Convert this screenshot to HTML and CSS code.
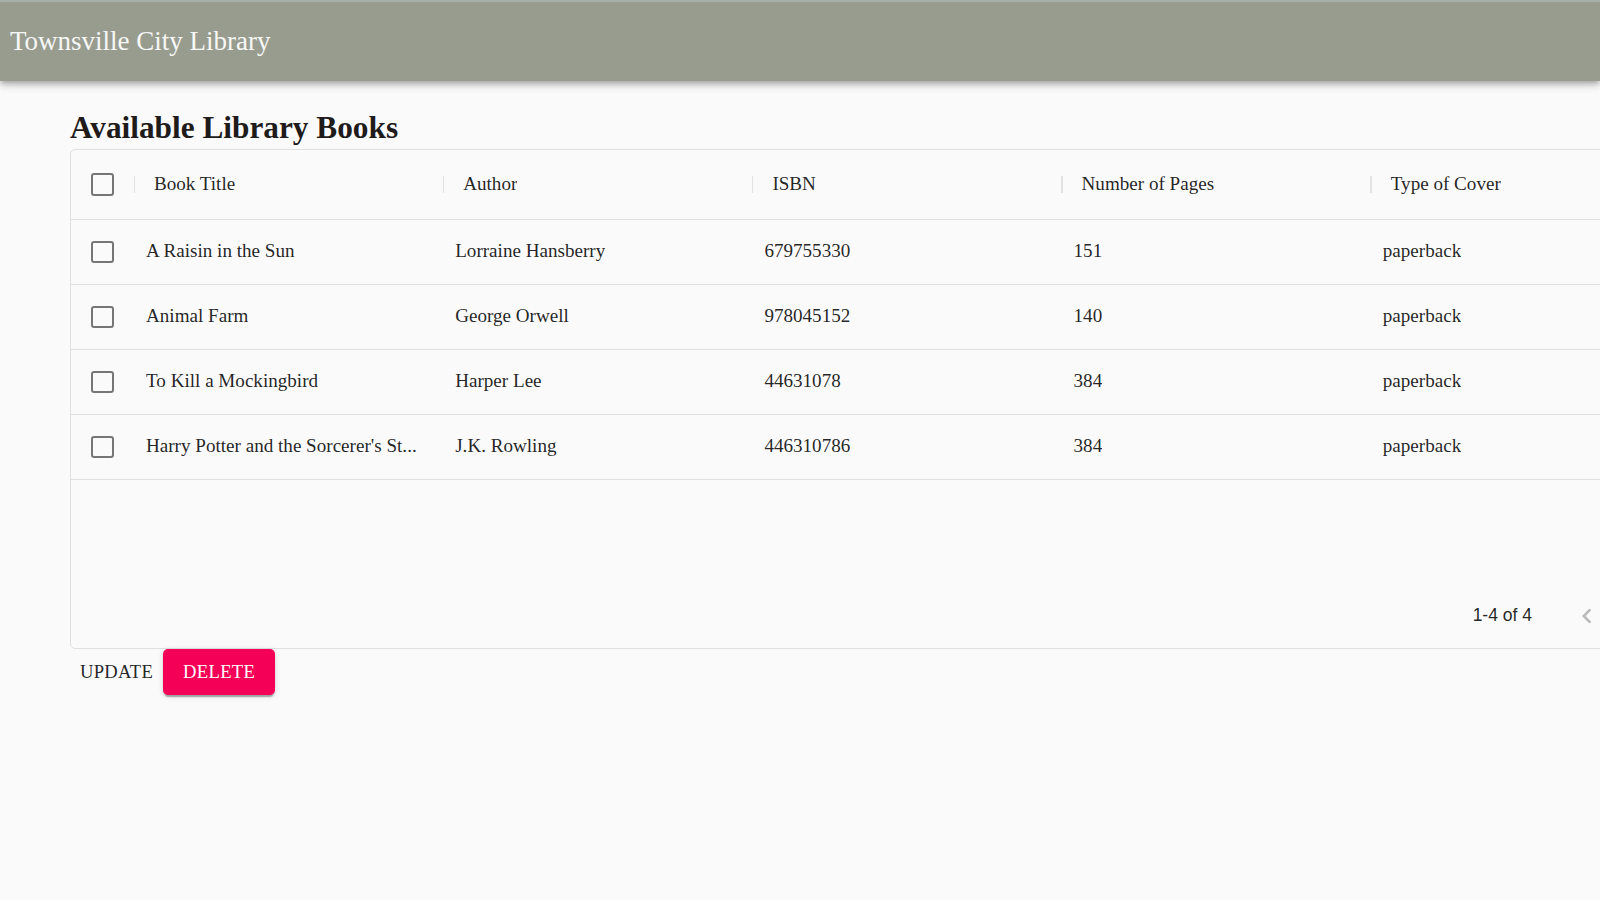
FILE: index.html
```html
<!DOCTYPE html>
<html lang="en">
<head>
<meta charset="utf-8">
<title>Townsville City Library</title>
<link rel="stylesheet" href="styles.css">
</head>
<body>
<header class="appbar">
  <h1 class="brand">Townsville City Library</h1>
</header>
<main class="content">
  <h2 class="page-title">Available Library Books</h2>
  <div class="datagrid">
    <div class="dg-row dg-header">
      <div class="dg-cell dg-check"><span class="checkbox"></span></div>
      <div class="dg-cell dg-hcell"><span class="txt">Book Title</span></div>
      <div class="dg-cell dg-hcell"><span class="txt">Author</span></div>
      <div class="dg-cell dg-hcell"><span class="txt">ISBN</span></div>
      <div class="dg-cell dg-hcell"><span class="txt">Number of Pages</span></div>
      <div class="dg-cell dg-hcell"><span class="txt">Type of Cover</span></div>
    </div>
    <div class="dg-body">
      <div class="dg-row dg-data">
        <div class="dg-cell dg-check"><span class="checkbox"></span></div>
        <div class="dg-cell"><span class="txt">A Raisin in the Sun</span></div>
        <div class="dg-cell"><span class="txt">Lorraine Hansberry</span></div>
        <div class="dg-cell"><span class="txt">679755330</span></div>
        <div class="dg-cell"><span class="txt">151</span></div>
        <div class="dg-cell"><span class="txt">paperback</span></div>
      </div>
      <div class="dg-row dg-data">
        <div class="dg-cell dg-check"><span class="checkbox"></span></div>
        <div class="dg-cell"><span class="txt">Animal Farm</span></div>
        <div class="dg-cell"><span class="txt">George Orwell</span></div>
        <div class="dg-cell"><span class="txt">978045152</span></div>
        <div class="dg-cell"><span class="txt">140</span></div>
        <div class="dg-cell"><span class="txt">paperback</span></div>
      </div>
      <div class="dg-row dg-data">
        <div class="dg-cell dg-check"><span class="checkbox"></span></div>
        <div class="dg-cell"><span class="txt">To Kill a Mockingbird</span></div>
        <div class="dg-cell"><span class="txt">Harper Lee</span></div>
        <div class="dg-cell"><span class="txt">44631078</span></div>
        <div class="dg-cell"><span class="txt">384</span></div>
        <div class="dg-cell"><span class="txt">paperback</span></div>
      </div>
      <div class="dg-row dg-data">
        <div class="dg-cell dg-check"><span class="checkbox"></span></div>
        <div class="dg-cell"><span class="txt" title="Harry Potter and the Sorcerer's Stone">Harry Potter and the Sorcerer's St...</span></div>
        <div class="dg-cell"><span class="txt">J.K. Rowling</span></div>
        <div class="dg-cell"><span class="txt">446310786</span></div>
        <div class="dg-cell"><span class="txt">384</span></div>
        <div class="dg-cell"><span class="txt">paperback</span></div>
      </div>
    </div>
    <div class="dg-footer">
      <span class="page-info">1-4 of 4</span>
      <div class="page-actions">
        <span class="icon-btn">
          <svg viewBox="0 0 24 24" width="30" height="30"><path d="M15.41 7.41L14 6l-6 6 6 6 1.41-1.41L10.83 12z" fill="currentColor"/></svg>
        </span>
        <span class="icon-btn">
          <svg viewBox="0 0 24 24" width="30" height="30"><path d="M10 6L8.59 7.41 13.17 12l-4.58 4.59L10 18l6-6z" fill="currentColor"/></svg>
        </span>
      </div>
    </div>
  </div>
  <div class="actions">
    <button class="btn btn-text">Update</button>
    <button class="btn btn-contained">Delete</button>
  </div>
</main>
</body>
</html>
```

FILE: styles.css
```css
html, body {
  margin: 0;
  padding: 0;
  overflow: hidden;
}
body {
  width: 1600px;
  height: 900px;
  background: #fafafa;
  font-family: "Liberation Serif", "Times New Roman", serif;
  color: rgba(0, 0, 0, 0.87);
}

.appbar {
  box-sizing: border-box;
  height: 81px;
  background: #979c8f;
  border-top: 2px solid #a7b0a8;
  display: flex;
  align-items: center;
  padding: 0 0 2px 10px;
  box-shadow: 0 2px 5px -1px rgba(0,0,0,0.2), 0 5px 6px 0 rgba(0,0,0,0.14), 0 1px 12px 0 rgba(0,0,0,0.12);
  position: relative;
  z-index: 1;
}
.brand {
  margin: 0;
  font-size: 27px;
  line-height: 32px;
  font-weight: normal;
  color: #f7f7f5;
}

.content {
  padding: 29px 0 0 70px;
}
.page-title {
  margin: 0 0 3px;
  font-size: 31.3px;
  line-height: 36px;
  font-weight: bold;
  color: #1f1b1b;
}

.datagrid {
  box-sizing: border-box;
  width: 1611px;
  height: 500px;
  border: 1px solid #e0e0e0;
  border-radius: 5px;
  display: flex;
  flex-direction: column;
}
.dg-row {
  display: grid;
  grid-template-columns: 62.5px repeat(5, 309.2px);
  border-bottom: 1px solid #e0e0e0;
  box-sizing: border-box;
}
.dg-header {
  height: 70px;
}
.dg-data {
  height: 65px;
}
.dg-body {
  flex: 1;
}
.dg-cell {
  display: flex;
  align-items: center;
  padding: 0 12.5px 2px;
  overflow: hidden;
  min-width: 0;
  font-size: 19.1px;
  position: relative;
}
.dg-check {
  justify-content: center;
  padding: 0;
}
.dg-hcell {
  padding-left: 20.5px;
}
.dg-hcell::before {
  content: "";
  position: absolute;
  left: 0;
  top: 50%;
  width: 1.6px;
  height: 17px;
  margin-top: -9px;
  background: #e2e2e2;
}
.txt {
  white-space: nowrap;
  overflow: hidden;
  text-overflow: ellipsis;
}
.checkbox {
  box-sizing: border-box;
  width: 22.5px;
  height: 22.5px;
  border: 2.5px solid #767676;
  border-radius: 3px;
}

.dg-footer {
  height: 65px;
  display: flex;
  align-items: center;
  justify-content: flex-end;
  padding-right: 3px;
}
.page-info {
  font-family: "Liberation Sans", Arial, sans-serif;
  font-size: 17.5px;
  color: rgba(0, 0, 0, 0.87);
}
.page-actions {
  display: flex;
  margin-left: 25px;
}
.icon-btn {
  display: flex;
  padding: 15px;
  color: rgba(0, 0, 0, 0.26);
}

.actions {
  display: flex;
  gap: 0;
  align-items: center;
}
.btn {
  font-family: "Liberation Serif", "Times New Roman", serif;
  font-size: 18.6px;
  letter-spacing: 0.3px;
  text-transform: uppercase;
  line-height: 30.5px;
  border: 0;
  border-radius: 5px;
  cursor: pointer;
}
.btn-text {
  background: transparent;
  color: rgba(0, 0, 0, 0.87);
  padding: 7.5px 10px;
}
.btn-contained {
  background: #f50057;
  color: #ffffff;
  padding: 7.5px 20px;
  box-shadow: 0 4px 1px -2px rgba(0,0,0,0.2), 0 2px 2px 0 rgba(0,0,0,0.14), 0 1px 6px 0 rgba(0,0,0,0.12);
}
```
